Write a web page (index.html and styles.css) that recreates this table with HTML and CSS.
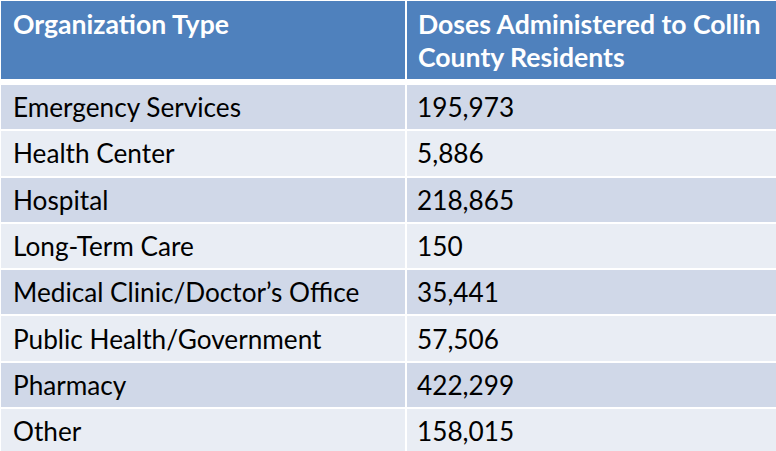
FILE: index.html
```html
<!DOCTYPE html>
<html>
<head>
<meta charset="utf-8">
<link rel="stylesheet" href="styles.css">
</head>
<body>
<div class="tbl">
  <div class="cell head">Organization Type</div>
  <div class="cell head val">Doses Administered to Collin<br>County Residents</div>
  <div class="cell odd">Emergency Services</div>
  <div class="cell odd val">195,973</div>
  <div class="cell even">Health Center</div>
  <div class="cell even val">5,886</div>
  <div class="cell odd">Hospital</div>
  <div class="cell odd val">218,865</div>
  <div class="cell even">Long-Term Care</div>
  <div class="cell even val">150</div>
  <div class="cell odd">Medical Clinic/Doctor’s Office</div>
  <div class="cell odd val">35,441</div>
  <div class="cell even">Public Health/Government</div>
  <div class="cell even val">57,506</div>
  <div class="cell odd">Pharmacy</div>
  <div class="cell odd val">422,299</div>
  <div class="cell even">Other</div>
  <div class="cell even val">158,015</div>
</div>
</body>
</html>
```
FILE: styles.css
```css
html, body {
  margin: 0;
  padding: 0;
  background: #ffffff;
  overflow: hidden;
}
.tbl {
  display: grid;
  grid-template-columns: 404px 370px;
  grid-template-rows: 82px repeat(8, 44.3px);
  column-gap: 2px;
  row-gap: 2px;
  margin: 1px 0 0 1px;
  font-family: Lato, "Liberation Sans", sans-serif;
  font-size: 26.2px;
  color: #000000;
}
.cell {
  padding: 0 12px 0 12px;
  display: flex;
  align-items: center;
  white-space: nowrap;
  box-sizing: border-box;
}
.val {
  padding-left: 10px;
}
.head {
  display: block;
  background: #4f81bd;
  color: #ffffff;
  font-weight: bold;
  font-size: 26.6px;
  align-self: start;
  line-height: 33px;
  padding-top: 7px;
  padding-right: 0;
  height: 78px;
}
.head.val {
  padding-left: 11px;
}
.odd {
  background: #d0d8e8;
}
.even {
  background: #e9edf4;
}
```
